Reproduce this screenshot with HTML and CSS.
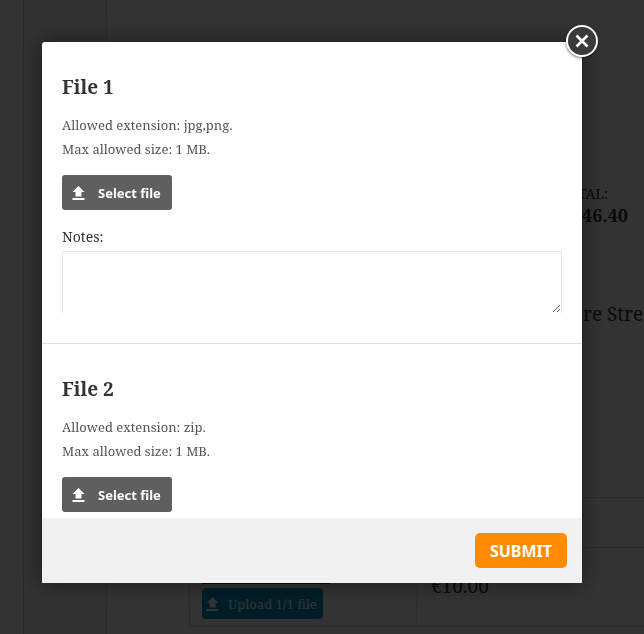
FILE: index.html
```html
<!DOCTYPE html>
<html lang="en">
<head>
  <meta charset="UTF-8" />
  <meta name="viewport" content="width=device-width, initial-scale=1" />
  <title>Upload files</title>
  <link rel="stylesheet" href="styles.css">
</head>
<body>
  <svg class="sprite" aria-hidden="true">
    <symbol id="icon-upload" viewBox="0 0 14 14">
      <path d="M6.5 0 L12.5 6 H9.5 V10.5 H3.5 V6 H0.5 Z M0.5 12 H12.5 V14 H0.5 Z" />
    </symbol>
  </svg>

  <div class="page">
    <div class="page-gutter"></div>
    <div class="page-menu"></div>
    <div class="page-margin"></div>
    <main class="order">
      <section class="order-summary">
        <div class="order-label">TOTAL:</div>
        <div class="order-total">€46.40</div>
        <address class="order-address">Square Street</address>
      </section>
      <div class="order-row order-head"></div>
      <div class="order-row order-item">
        <div class="item-files">
          <div class="item-line"></div>
          <button type="button" class="btn-upload">
            <svg class="icon"><use href="#icon-upload" /></svg>
            Upload 1/1 file
          </button>
        </div>
        <div class="item-price">€10.00</div>
      </div>
    </main>
  </div>

  <div class="overlay">
    <form class="modal" role="dialog" aria-label="Upload files">
      <button type="button" class="btn-close" aria-label="Close">
        <svg viewBox="0 0 14 14"><path d="M1.5 1.5 L12.5 12.5 M12.5 1.5 L1.5 12.5" /></svg>
      </button>

      <div class="modal-body">
        <section class="file">
          <h2>File 1</h2>
          <p>Allowed extension: jpg,png.</p>
          <p>Max allowed size: 1 MB.</p>
          <button type="button" class="btn-select">
            <svg class="icon"><use href="#icon-upload" /></svg>
            Select file
          </button>
          <label for="notes1">Notes:</label>
          <textarea id="notes1" name="notes1"></textarea>
        </section>

        <section class="file">
          <h2>File 2</h2>
          <p>Allowed extension: zip.</p>
          <p>Max allowed size: 1 MB.</p>
          <button type="button" class="btn-select">
            <svg class="icon"><use href="#icon-upload" /></svg>
            Select file
          </button>
        </section>
      </div>

      <div class="modal-footer">
        <button type="submit" class="btn-submit">SUBMIT</button>
      </div>
    </form>
  </div>
</body>
</html>
```

FILE: styles.css
```css
:root {
  --serif: "Noto Serif", "Droid Serif", "DejaVu Serif", serif;
  --sans: "Noto Sans", "Open Sans", sans-serif;
  --line: #dedede;
  --page-line: #d8d8d8;
  --gray: #5f5f5f;
  --orange: #ff8c00;
}

* {
  box-sizing: border-box;
}

body {
  margin: 0;
  height: 100vh;
  overflow: hidden;
  font-family: var(--serif);
  color: #333333;
  background-color: #ffffff;
}

button {
  border: none;
  cursor: pointer;
}

.sprite {
  position: absolute;
  width: 0;
  height: 0;
}

.icon {
  width: 14px;
  height: 14px;
  flex: none;
  fill: currentColor;
}

/* order page behind the dialog */
.page {
  display: flex;
  height: 100vh;
}

.page-gutter {
  width: 24px;
  border-right: 1px solid var(--page-line);
}

.page-menu {
  width: 83px;
  border-right: 1px solid var(--page-line);
  background-color: #f8f8f8;
}

.page-margin {
  width: 82px;
}

.order {
  flex: 1;
  min-width: 0;
  display: flex;
  flex-direction: column;
}

.order-summary {
  height: 497px;
  padding: 184px 16px 0 0;
  text-align: right;
  white-space: nowrap;
}

.order-label {
  padding-right: 20px;
  font-size: 14px;
  line-height: 20px;
}

.order-total {
  font-size: 18px;
  font-weight: bold;
  line-height: 22px;
}

.order-address {
  margin: 76px -32px 0 0;
  font-size: 19px;
  font-style: normal;
  line-height: 24px;
}

.order-row {
  border-top: 1px solid var(--page-line);
  border-left: 1px solid var(--page-line);
}

.order-head {
  height: 50px;
}

.order-item {
  display: flex;
  height: 80px;
  border-bottom: 1px solid var(--page-line);
}

.item-files {
  width: 227px;
  padding: 34px 12px 0;
  border-right: 1px solid #e6e6e6;
}

.item-line {
  width: 128px;
  height: 2px;
  margin-bottom: 4px;
  background-color: #333333;
}

.item-price {
  padding: 26px 14px 0;
  font-size: 19px;
  line-height: 24px;
}

.btn-upload {
  display: flex;
  align-items: center;
  gap: 8px;
  height: 31px;
  padding: 0 6px 0 4px;
  border-radius: 4px;
  font-family: var(--serif);
  font-size: 13px;
  white-space: nowrap;
  color: #ffffff;
  background-color: #0090c0;
}

/* dialog */
.overlay {
  position: fixed;
  inset: 0;
  display: flex;
  padding: 42px 62px 51px 42px;
  background-color: rgba(0, 0, 0, 0.8);
}

.modal {
  position: relative;
  flex: 1;
  min-width: 0;
  display: flex;
  flex-direction: column;
  border-radius: 3px 3px 0 0;
  background-color: #ffffff;
  box-shadow: 0 0 25px rgba(0, 0, 0, 0.5);
}

.btn-close {
  position: absolute;
  top: -17px;
  right: -16px;
  display: flex;
  align-items: center;
  justify-content: center;
  width: 32px;
  height: 32px;
  padding: 0;
  border: 2px solid #ffffff;
  border-radius: 50%;
  background-color: #3a3a3a;
  box-shadow: 0 1px 3px rgba(0, 0, 0, 0.6);
}

.btn-close svg {
  width: 14px;
  height: 14px;
  fill: none;
  stroke: #ffffff;
  stroke-width: 2.6;
}

.modal-body {
  flex: 1;
  min-height: 0;
  overflow: hidden;
}

.file {
  padding: 32px 20px 30px;
  border-bottom: 1px solid var(--line);
}

.file h2 {
  margin: 0 0 13px;
  font-size: 19px;
  line-height: 26px;
}

.file p {
  margin: 0;
  font-size: 13px;
  line-height: 24px;
  color: #555555;
}

.file label {
  display: block;
  margin-top: 16px;
  font-size: 14px;
  line-height: 22px;
}

.file textarea {
  display: block;
  width: 100%;
  height: 62px;
  margin-top: 3px;
  padding: 6px;
  border: 1px solid #e4e4e4;
  border-bottom: none;
  border-radius: 2px;
  font-family: var(--serif);
  font-size: 14px;
  resize: vertical;
}

.btn-select {
  display: flex;
  align-items: center;
  gap: 12px;
  height: 35px;
  margin-top: 14px;
  padding: 0 11px 0 10px;
  border-radius: 3px;
  font-family: var(--sans);
  font-size: 13px;
  font-weight: bold;
  color: #ffffff;
  background-color: var(--gray);
}

.modal-footer {
  display: flex;
  justify-content: flex-end;
  padding: 15px;
  background-color: #f1f1f1;
}

.btn-submit {
  height: 35px;
  padding: 0 15px;
  border-radius: 5px;
  font-family: var(--sans);
  font-size: 16px;
  font-weight: bold;
  color: #ffffff;
  background-color: var(--orange);
}
```
